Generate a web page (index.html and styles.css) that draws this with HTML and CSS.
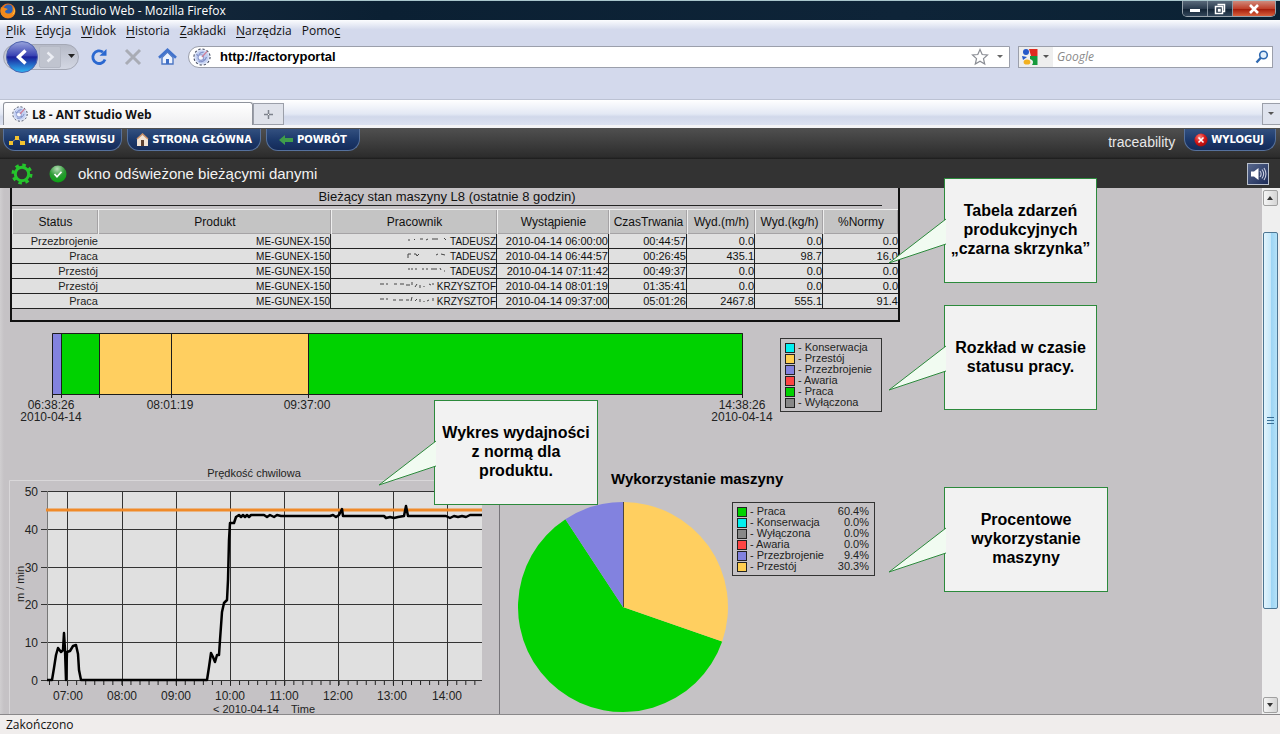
FILE: index.html
```html
<!DOCTYPE html>
<html lang="pl">
<head>
<meta charset="utf-8">
<title>L8 - ANT Studio Web</title>
<link rel="stylesheet" href="styles.css">
</head>
<body>
<svg class="defs" width="0" height="0" aria-hidden="true">
  <defs>
    <linearGradient id="gBack" x1="0" y1="0" x2="0" y2="1"><stop offset="0" stop-color="#9aa5dc"/><stop offset=".45" stop-color="#3a44b4"/><stop offset=".5" stop-color="#1a1f9a"/><stop offset="1" stop-color="#2fb8f4"/></linearGradient>
    <radialGradient id="gRed" cx=".4" cy=".3" r=".8"><stop offset="0" stop-color="#ff8a80"/><stop offset=".5" stop-color="#d81818"/><stop offset="1" stop-color="#8c0808"/></radialGradient>
    <radialGradient id="gGreen" cx=".45" cy=".2" r=".9"><stop offset="0" stop-color="#b8dcb8"/><stop offset=".5" stop-color="#2c9a34"/><stop offset="1" stop-color="#00a80a"/></radialGradient>
    <symbol id="logo" viewBox="0 0 16 16">
      <circle cx="8" cy="8" r="7.2" fill="#dfe6f8" stroke="#3a4258" stroke-width=".9" stroke-dasharray="2 1.8"/>
      <circle cx="8" cy="8" r="5.800" fill="#c3d0f2"/>
      <path d="M3 5.500 10 11M5 12c3 1 6-1 7-4M4.500 7.500l2-3 3-1" fill="none" stroke="#8291c8" stroke-width="1"/>
      <circle cx="7" cy="8.500" r="2.500" fill="#f5f7ff" stroke="#8f9dd0"/>
      <path d="M8 8l4.500-5" stroke="#d08098" stroke-width="1.200"/>
    </symbol>
  </defs>
</svg>

<header class="chrome">
  <div class="titlebar">
    <svg class="fox" width="16" height="16" viewBox="0 0 16 16" aria-hidden="true">
      <circle cx="8" cy="8" r="7.500" fill="#e8701a"/><circle cx="8.500" cy="6.500" r="5" fill="#2c62b8"/>
      <path d="M1 4c1 1 2 0 4 1l3 1c-1 1-3 1-3 3 2 2 5 2 7 0 1-2 1-4 0-6 3 2 4 6 2 9-2 3-7 4-10 2C0 12 0 7 1 4z" fill="#f28a1c"/>
      <path d="M13 4c2 3 1 6-1 8 3-1 4-5 1-8z" fill="#ffd24a"/>
    </svg>
    <span class="titletext">L8 - ANT Studio Web - Mozilla Firefox</span>
    <div class="winbtns">
      <button aria-label="Minimalizuj"><svg width="12" height="10"><rect x="1" y="5" width="10" height="3" fill="#fff"/></svg></button>
      <button aria-label="Przywróć"><svg width="12" height="12"><path d="M3.500 1.500h7v7h-2M1.500 3.500h7v7h-7zM4.500 6.500h1.500v1.500h-1.500z" fill="none" stroke="#fff" stroke-width="1.500"/></svg></button>
      <button class="close" aria-label="Zamknij"><svg width="12" height="10"><path d="M2 1l8 8M10 1l-8 8" stroke="#fff" stroke-width="2.600"/></svg></button>
    </div>
  </div>
  <nav class="menubar">
    <button><u>P</u>lik</button><button><u>E</u>dycja</button><button><u>W</u>idok</button><button><u>H</u>istoria</button><button><u>Z</u>akładki</button><button><u>N</u>arzędzia</button><button>Pomo<u>c</u></button>
  </nav>
  <div class="navbar">
    <div class="history">
      <button aria-label="Wstecz"><svg width="34" height="34" viewBox="0 0 34 34"><circle cx="17" cy="17" r="15.500" fill="url(#gBack)" stroke="#4d62ae"/><path d="M20.500 10.500 13.500 17l7 6.500" fill="none" stroke="#fff" stroke-width="3.400"/></svg></button>
      <button class="fwd" aria-label="Dalej"><svg width="20" height="20"><path d="M7.500 5.500 12.500 10l-5 4.500" fill="none" stroke="#eceef4" stroke-width="2.400"/></svg></button>
      <button class="drop" aria-label="Historia kart"><svg width="8" height="5"><path d="M0 0h7L3.500 4z" fill="#222"/></svg></button>
    </div>
    <button class="tool" aria-label="Odśwież"><svg width="18" height="18" viewBox="0 0 18 18"><path d="M15 11.500A6.300 6.300 0 1 1 13 4.200" fill="none" stroke="#2a68d0" stroke-width="2.800"/><path d="M9.500 7.800h7V1z" fill="#2a68d0"/></svg></button>
    <button class="tool" aria-label="Zatrzymaj"><svg width="18" height="18" viewBox="0 0 18 18"><path d="M2 2l14 14M16 2 2 16" stroke="#a9acb5" stroke-width="3"/></svg></button>
    <button class="tool" aria-label="Strona startowa"><svg width="19" height="18" viewBox="0 0 19 18"><path d="M4 9.500V16h11V9.500L9.500 4z" fill="#eef3fd" stroke="#4d77c4" stroke-width="1.400"/><path d="M1 9.800 9.500 1.800l8.500 8" fill="none" stroke="#4273cc" stroke-width="2.600"/><path d="M8 16v-5h3v5z" fill="#3f6fc6"/></svg></button>
    <div class="field url">
      <svg width="18" height="18"><use href="#logo"/></svg>
      <input type="text" aria-label="Adres" value="http://factoryportal">
      <button aria-label="Dodaj zakładkę"><svg width="18" height="18" viewBox="0 0 18 18"><path d="M9 1.500l2.200 5 5.300.5-4 3.600 1.200 5.400L9 13.200 4.300 16l1.200-5.400-4-3.600 5.300-.5z" fill="#fff" stroke="#8a8d94" stroke-width="1.200"/></svg></button>
      <button class="drop2" aria-label="Lista adresów"><svg width="7" height="4"><path d="M0 0h6L3 3z" fill="#666"/></svg></button>
    </div>
    <div class="field search">
      <button class="engine" aria-label="Wyszukiwarka"><svg width="18" height="18" viewBox="0 0 18 18"><path d="M8 1h8.500v7H10z" fill="#e02b20"/><path d="M9 8h7.500v9H11c2-3 1-5-2-6z" fill="#159a3c"/><circle cx="5" cy="4" r="3" fill="#2457c8"/><path d="M1 8l5 1-4 3z" fill="#2457c8"/><ellipse cx="6" cy="14" rx="3.400" ry="2.600" fill="#f2b01e"/></svg><svg width="7" height="4"><path d="M0 0h6L3 3z" fill="#555"/></svg></button>
      <input type="text" aria-label="Szukaj" placeholder="Google">
      <button aria-label="Szukaj w sieci"><svg width="14" height="14" viewBox="0 0 14 14"><circle cx="8.500" cy="5" r="3.800" fill="#e4f0fb" stroke="#2f69b0" stroke-width="1.600"/><path d="M5.800 7.800 1.500 12.500" stroke="#2f69b0" stroke-width="2.400"/></svg></button>
    </div>
  </div>
  <div class="tabstrip">
    <button class="tab"><svg width="16" height="16"><use href="#logo"/></svg>L8 - ANT Studio Web</button>
    <button class="newtab" aria-label="Nowa karta"><svg width="9" height="9"><path d="M4.500 0v9M0 4.500h9" stroke="#7d828c" stroke-width="1.500"/><rect x="4" y="4" width="1" height="1" fill="#fff"/></svg></button>
    <button class="alltabs" aria-label="Lista kart"><svg width="7" height="4"><path d="M0 0h6L3 3z" fill="#555"/></svg></button>
  </div>
</header>

<div class="app">
  <nav class="topbar">
    <a class="pill" href="#mapa"><svg width="16" height="12" viewBox="0 0 16 12"><path d="M3 8l5-4 5 4" stroke="#999" fill="none"/><rect x="0" y="7" width="4" height="4" fill="#f2c230"/><rect x="6" y="2" width="4" height="4" fill="#f2c230"/><rect x="11" y="7" width="5" height="4" fill="#f2c230"/></svg>MAPA SERWISU</a>
    <a class="pill" href="#start"><svg width="13" height="14" viewBox="0 0 13 14"><path d="M1 6 6.500 1 12 6v7H1z" fill="#f2e3d4"/><path d="M1 6 6.500 1 12 6" fill="none" stroke="#c89068" stroke-width="1.500"/><path d="M5 13V7h3v6z" fill="#5c4030"/></svg>STRONA GŁÓWNA</a>
    <a class="pill back" href="#powrot"><svg width="14" height="10" viewBox="0 0 14 10"><path d="M0 5l6-5v3h8v4H6v3z" fill="#3f9e4a"/></svg>POWRÓT</a>
    <span class="user">traceability</span>
    <button class="pill logout"><svg width="14" height="14"><circle cx="7" cy="7" r="6.500" fill="url(#gRed)"/><path d="M4.500 4.500l5 5M9.500 4.500l-5 5" stroke="#fff" stroke-width="1.600"/></svg>WYLOGUJ</button>
  </nav>
  <div class="infobar">
    <svg width="22" height="22" viewBox="0 0 22 22" aria-hidden="true"><circle cx="11" cy="11" r="9" fill="none" stroke="#25c52c" stroke-width="3" stroke-dasharray="3.500 3.570"/><circle cx="11" cy="11" r="6.700" fill="none" stroke="#25c52c" stroke-width="3"/></svg>
    <svg class="ok" width="18" height="18" viewBox="0 0 18 18" aria-hidden="true"><circle cx="9" cy="9" r="8.500" fill="url(#gGreen)"/><path d="M5.500 9l2.500 2.800 4.500-5" fill="none" stroke="#fff" stroke-width="1.700"/></svg>
    <span class="infotext">okno odświeżone bieżącymi danymi</span>
    <button class="sound" aria-label="Dźwięk"><svg width="20" height="20" viewBox="0 0 20 20"><path d="M3 7.500h3L10.500 4v12L6 12.500H3z" fill="#fff"/><path d="M12 7c1.500 2 1.500 4 0 6M14 5.500c2.200 3 2.200 6 0 9M16 4c2.600 4 2.600 8 0 12" fill="none" stroke="#c6cce0" stroke-width="1.100"/></svg></button>
  </div>

  <div class="viewport">
    <main class="content">
      <section class="events">
        <h1>Bieżący stan maszyny L8 (ostatnie 8 godzin)</h1>
        <table>
          <colgroup><col class="c1"><col class="c2"><col class="c3"><col class="c4"><col class="c5"><col class="c6"><col class="c6"><col class="c7"></colgroup>
          <thead><tr><th>Status</th><th>Produkt</th><th>Pracownik</th><th>Wystąpienie</th><th>CzasTrwania</th><th>Wyd.(m/h)</th><th>Wyd.(kg/h)</th><th>%Normy</th></tr></thead>
          <tbody>
            <tr><td>Przezbrojenie</td><td class="caps">ME-GUNEX-150</td><td class="caps"><svg class="smudge" width="40" height="8"><path d="M1 3h2M7 2l1 1M13 2h3M19 3l2-1M25 2h6M37 1l2 2" stroke="#444"/></svg>TADEUSZ</td><td>2010-04-14 06:00:00</td><td>00:44:57</td><td>0.0</td><td>0.0</td><td>0.0</td></tr>
            <tr><td>Praca</td><td class="caps">ME-GUNEX-150</td><td class="caps"><svg class="smudge" width="40" height="8"><path d="M1 6V2h3M7 2h2l1 2 2-2M29 3l2-1M34 2l4 1" fill="none" stroke="#444"/></svg>TADEUSZ</td><td>2010-04-14 06:44:57</td><td>00:26:45</td><td>435.1</td><td>98.7</td><td>16.0</td></tr>
            <tr><td>Przestój</td><td class="caps">ME-GUNEX-150</td><td class="caps"><svg class="smudge" width="40" height="8"><path d="M1 2h2M5 1v2M8 2h2M15 2h2M20 1v2M24 2h6M33 1l1 2M37 4h1" stroke="#444"/></svg>TADEUSZ</td><td>2010-04-14 07:11:42</td><td>00:49:37</td><td>0.0</td><td>0.0</td><td>0.0</td></tr>
            <tr><td>Przestój</td><td class="caps">ME-GUNEX-150</td><td class="caps"><svg class="smudge" width="55" height="8"><path d="M1 2h4M8 1v2M15 2h3M21 2h4M27 3h4M33 0v3M36 5l2-3M41 3v3M45 4v1M50 2l2 1M54 1v2" stroke="#444"/></svg>KRZYSZTOF</td><td>2010-04-14 08:01:19</td><td>01:35:41</td><td>0.0</td><td>0.0</td><td>0.0</td></tr>
            <tr><td>Praca</td><td class="caps">ME-GUNEX-150</td><td class="caps"><svg class="smudge" width="55" height="8"><path d="M1 2h4M8 1v2M14 3h3M20 3h4M27 3h3M32 4l1-4M36 4l2-2M41 2v3M45 4v1M48 4l2-1M54 1v3" stroke="#444"/></svg>KRZYSZTOF</td><td>2010-04-14 09:37:00</td><td>05:01:26</td><td>2467.8</td><td>555.1</td><td>91.4</td></tr>
          </tbody>
        </table>
      </section>

      <section class="timeline">
        <svg width="780" height="105" viewBox="0 0 780 105" role="img" aria-label="Rozkład statusu pracy w czasie">
          <rect x="52" y="11" width="10" height="62" fill="#8282df"/>
          <rect x="61" y="11" width="39" height="62" fill="#00d200"/>
          <rect x="99" y="11" width="209" height="62" fill="#ffcf60"/>
          <rect x="308" y="11" width="435" height="62" fill="#00d200"/>
          <path d="M52.500 76V11.500h690V76M52 72.500h691M61.500 11v65M99.500 11v65M171.500 11v65M308.500 11v65" fill="none" stroke="#1c1c1c"/>
          <g class="axis" text-anchor="middle">
            <text x="51" y="87">06:38:26</text><text x="51" y="99">2010-04-14</text>
            <text x="170" y="87">08:01:19</text><text x="307" y="87">09:37:00</text>
            <text x="742" y="87">14:38:26</text><text x="742" y="99">2010-04-14</text>
          </g>
        </svg>
        <ul class="legend">
          <li><i class="cyan"></i>- Konserwacja</li><li><i class="amber"></i>- Przestój</li><li><i class="blue"></i>- Przezbrojenie</li><li><i class="red"></i>- Awaria</li><li><i class="green"></i>- Praca</li><li><i class="grey"></i>- Wyłączona</li>
        </ul>
      </section>

      <section class="charts">
        <svg class="speed" width="500" height="287" viewBox="0 0 500 287" role="img" aria-label="Prędkość chwilowa">
          <text x="254" y="50" text-anchor="middle" class="small">Prędkość chwilowa</text>
          <path d="M9.500 287V53.500h489" fill="none" stroke="#d9d7d9"/>
          <path d="M499.500 53v234" stroke="#77757a"/>
          <rect x="47" y="64" width="435" height="189" fill="#e0e0e0"/>
          <path d="M41 64.500h441M41 102.500h441M41 140.500h441M41 177.500h441M41 215.500h441M41 253.500h441M67.500 64v195M122.500 64v195M176.500 64v195M230.500 64v195M284.500 64v195M338.500 64v195M393.500 64v195M447.500 64v195" stroke="#333"/>
          <path d="M47.500 64v190" stroke="#777"/>
          <path d="M49 256h434" stroke="#222" stroke-width="4" stroke-dasharray="1 8.050"/>
          <path d="M46 83h436" stroke="#f08a28" stroke-width="3"/>
          <path d="M47 253H52L54 241 56 228 58 221 61 225 63 223 64 206 65 223 66 253 67 225 70 224 73 219 76 218 78 227 79 243 81 253H207L209 240 211 226 213 230 215 235 217 228H219L220 213 222 185 224 176 227 173 228 153 229 113 230 96H234L236 90 239 88 241 90 243 88 245 90 247 88 249 90 251 88H264L267 90 270 88 274 90 277 88 281 89H330L333 88 336 90 339 88 342 82 343 89H384L386 91 390 90 394 91 398 90 404 89 406 79 408 89H446L450 91 454 89 458 90 462 89 466 90 470 88H482" fill="none" stroke="#000" stroke-width="2.500" stroke-linejoin="round"/>
          <g class="axis" text-anchor="end"><text x="38" y="69">50</text><text x="38" y="107">40</text><text x="38" y="145">30</text><text x="38" y="182">20</text><text x="38" y="220">10</text><text x="38" y="258">0</text></g>
          <g class="axis" text-anchor="middle"><text x="68" y="273">07:00</text><text x="122" y="273">08:00</text><text x="176" y="273">09:00</text><text x="230" y="273">10:00</text><text x="284" y="273">11:00</text><text x="338" y="273">12:00</text><text x="392" y="273">13:00</text><text x="447" y="273">14:00</text></g>
          <text class="small" x="213" y="286">&lt; 2010-04-14</text><text class="small" x="291" y="286">Time</text>
          <text class="small" transform="translate(24 157) rotate(-90)" text-anchor="middle">m / min</text>
        </svg>
        <div class="usage">
          <h2>Wykorzystanie maszyny</h2>
          <div class="pierow">
            <svg width="210" height="210" viewBox="0 0 210 210" role="img" aria-label="Wykorzystanie maszyny">
              <path d="M105 105 204.200 139.400A105 105 0 1 1 47.400 17.200z" fill="#00d200"/>
              <path d="M105 105V0A105 105 0 0 1 204.200 139.400z" fill="#ffcf60"/>
              <path d="M105 105 47.400 17.200A105 105 0 0 1 105 0z" fill="#8282df"/>
              <path d="M105.500 0v105" stroke="#4c4440"/>
            </svg>
            <ul class="legend wide">
              <li><i class="green"></i>- Praca<b>60.4%</b></li><li><i class="cyan"></i>- Konserwacja<b>0.0%</b></li><li><i class="grey"></i>- Wyłączona<b>0.0%</b></li><li><i class="red"></i>- Awaria<b>0.0%</b></li><li><i class="blue"></i>- Przezbrojenie<b>9.4%</b></li><li><i class="amber"></i>- Przestój<b>30.3%</b></li>
            </ul>
          </div>
        </div>
      </section>
    </main>
    <div class="scroll">
      <button aria-label="W górę"><svg width="7" height="4"><path d="M0 4h6L3 0z" fill="#333"/></svg></button>
      <div class="track"><div class="thumb"><svg width="7" height="8"><path d="M0 .5h7M0 3.500h7M0 6.500h7" stroke="#3a6f96"/></svg></div></div>
      <button aria-label="W dół"><svg width="7" height="4"><path d="M0 0h6L3 4z" fill="#333"/></svg></button>
    </div>
  </div>

  <aside class="callout note-table"><p>Tabela zdarzeń produkcyjnych „czarna skrzynka”</p><svg class="tail" width="58" height="50"><path d="M58 2 1 46 58 27" fill="#f1fbf1" stroke="#2c8a3c"/></svg></aside>
  <aside class="callout note-timeline"><p>Rozkład w czasie statusu pracy.</p><svg class="tail" width="58" height="50"><path d="M58 2 1 46 58 27" fill="#f1fbf1" stroke="#2c8a3c"/></svg></aside>
  <aside class="callout note-speed"><p>Wykres wydajności z normą dla produktu.</p><svg class="tail" width="58" height="50"><path d="M58 2 1 46 58 27" fill="#f1fbf1" stroke="#2c8a3c"/></svg></aside>
  <aside class="callout note-usage"><p>Procentowe wykorzystanie maszyny</p><svg class="tail" width="58" height="50"><path d="M58 2 1 46 58 27" fill="#f1fbf1" stroke="#2c8a3c"/></svg></aside>
</div>
<footer class="statusbar">Zakończono</footer>
</body>
</html>
```
FILE: styles.css
```css
* { box-sizing: border-box; }
body { margin: 0; min-height: 100vh; display: flex; flex-direction: column; font-family: "Open Sans", "Noto Sans", sans-serif; font-size: 12px; color: #111; background: #f0edec; }
button { border: 0; padding: 0; margin: 0; background: none; font: inherit; color: inherit; }
svg { display: block; flex: none; }
.defs { position: absolute; }

/* Browser chrome */
.chrome { background: #d3d9ec; }
.titlebar { display: flex; align-items: center; height: 20px; padding-right: 4px; background: linear-gradient(90deg, #1a2c40, #0b2033 30%, #0e2438 70%, #0b2234); border-top: 1px solid #a9c6cc; color: #fff; }
.titletext { margin-left: 5px; line-height: 18px; font-size: 12px; }
.winbtns { display: flex; align-self: flex-start; margin-left: auto; border: 1px solid #9aa5ae; border-top: 0; border-radius: 0 0 5px 5px; overflow: hidden; }
.winbtns button { display: flex; align-items: center; justify-content: center; width: 25px; height: 15px; background: linear-gradient(#59697a, #2a3b4e 50%, #0f2031 51%, #33475b); border-right: 1px solid #8b98a4; }
.winbtns .close { width: 42px; border: 0; background: linear-gradient(#d08a7c, #c0412c 50%, #a01808 51%, #d8603c); }
.menubar { display: flex; gap: 10px; height: 22px; padding: 0 6px; background: linear-gradient(#fbfcfe, #d3d9ec 45%); }
.menubar button { line-height: 20px; }
.menubar u { text-underline-offset: 2px; }
.navbar { display: flex; align-items: center; height: 57px; padding: 0 7px 28px 3px; }
.history { display: flex; align-items: center; height: 26px; width: 76px; border-radius: 13px; border: 1px solid #a4a8b5; background: linear-gradient(#b6bac7, #d3d7e3); margin-right: 11px; }
.history button:first-child { margin-left: 1px; }
.fwd { border: 1px solid #b5b9c5; border-radius: 2px; background: #c0c4cf; }
.drop { margin-left: 7px; }
.tool { margin-right: 16px; }
.tool + .tool + .tool { margin-right: 11px; }
.field { display: flex; align-items: center; height: 22px; background: #fff; border: 1px solid #9b9fab; }
.field input { flex: 1; min-width: 0; border: 0; outline: 0; background: none; padding: 0; height: 18px; }
.url { flex: 1; border-radius: 11px 0 0 11px; padding: 0 5px 0 4px; margin-right: 8px; }
.url input { margin-left: 9px; font: bold 13px "Liberation Sans", sans-serif; color: #000; }
.drop2 { margin-left: 8px; }
.search { width: 255px; padding-right: 3px; }
.engine { display: flex; align-items: center; gap: 4px; height: 20px; padding: 0 3px 0 2px; background: #eee; }
.search input { margin-left: 4px; font: italic 12px "Open Sans", sans-serif; }
.search input::placeholder { color: #8a8a8a; }
.tabstrip { display: flex; align-items: flex-end; height: 29px; padding: 0 0 3px 3px; border-top: 1px solid #bcc2d3; background: linear-gradient(#fff, #e3e8f4 50%, #d1d8ea 60%, #dbe1f0 88%, #f4f4f6 90%); }
.tab { display: flex; align-items: center; gap: 4px; flex: 0 1 250px; height: 23px; padding-left: 8px; border: 1px solid #8f939c; border-bottom: 0; border-radius: 3px 3px 0 0; background: linear-gradient(#fff, #efeff1); font-weight: bold; text-align: left; }
.newtab { display: flex; align-items: center; justify-content: center; width: 31px; height: 22px; border: 1px solid #9b9fa9; background: #dfe2ea; }
.alltabs { display: flex; align-items: center; justify-content: center; width: 18px; height: 22px; margin-left: auto; border: 1px solid #9b9fa9; border-right: 0; background: #dfe3ee; }

/* Application bars */
.app { position: relative; flex: 1; display: flex; flex-direction: column; font-family: "Liberation Sans", Arial, sans-serif; }
.topbar { display: flex; align-items: flex-start; gap: 5px; height: 31px; padding: 1px 4px 0 3px; background: linear-gradient(#505050, #2c2c2c 93%, #1c1c1c); }
.pill { display: flex; align-items: center; gap: 3px; height: 22px; padding: 0 6px 0 5px; border: 1px solid #56719c; border-top: 0; border-radius: 0 0 12px 12px; background: linear-gradient(#33507f, #1d3a6c 50%, #142a58); color: #fff; font: bold 10px "DejaVu Sans", sans-serif; text-decoration: none; }
.topbar .pill + .pill { padding: 0 8px; }
.topbar .back.pill { padding: 0 12px; gap: 4px; }
.user { margin-left: auto; margin-right: 4px; line-height: 26px; font-size: 14px; color: #e8e8e8; }
.topbar .logout { padding: 0 11px 0 9px; }
.infobar { display: flex; align-items: center; height: 29px; padding: 0 11px; background: #333; }
.ok { margin: 0 11px 0 16px; }
.infotext { font-size: 15px; color: #f2f2f2; }
.sound { margin-left: auto; border: 1px solid #b9c0cc; background: linear-gradient(135deg, #56668c, #1d2c58); }

/* Page body */
.viewport { flex: 1; display: flex; border-bottom: 1px solid #8a888a; }
.content { flex: 1; min-width: 0; background: linear-gradient(90deg, #d0ced0, #c5c2c5 4px); }
.events { width: min(890px, calc(100% - 20px)); height: 134px; margin-left: 10px; border: 2px solid #111; }
.events h1 { margin: 0 16px 3px 0; height: 18px; border-bottom: 1px solid #222; text-align: center; font-size: 13px; line-height: 18px; font-weight: normal; }
table { width: 100%; table-layout: fixed; border-collapse: separate; border-spacing: 0; }
.events { border-top: 0; }
.c1 { width: 86px; } .c3 { width: 166px; } .c4 { width: 112px; } .c5 { width: 78px; } .c6 { width: 68px; } .c7 { width: 75px; }
th { height: 25px; padding: 0; font-size: 12px; font-weight: normal; border: 1px solid #eee; border-width: 1px 0 0 1px; box-shadow: inset -1px -1px #a5a3a5; background: #c4c4c4; }
td { height: 15px; padding: 1px 0 0; font-size: 11px; line-height: 13px; text-align: right; white-space: nowrap; background: #e0e0e0; border-right: 1px solid #222; border-bottom: 1px solid #222; }
td:first-child, td:last-child { border-right: 0; }
td:first-child { color: #222; }
.caps { font-size: 10px; }
.smudge { display: inline-block; margin-right: 3px; }
.timeline { display: flex; align-items: flex-start; height: 105px; }
.axis text { font-size: 12px; fill: #222; }
.small { font-size: 11px; fill: #222; }
.legend { list-style: none; margin: 16px 0 0; padding: 3px 4px; width: 102px; border: 1px solid #333; font-size: 11px; line-height: 11px; color: #222; }
.legend li { display: flex; gap: 3px; }
.legend i { width: 10px; height: 10px; border: 1px solid #222; margin-top: 1px; }
.legend b { margin-left: auto; font-weight: normal; }
.legend.wide { width: 143px; margin: 0 0 0 4px; padding: 3px 5px 3px 4px; }
.cyan { background: #00f0f0; } .amber { background: #ffcf50; } .blue { background: #8282df; }
.red { background: #f44; } .green { background: #00d200; } .grey { background: #888; }
.charts { display: flex; align-items: flex-start; }
.speed { overflow: visible; }
.usage { padding: 42px 0 0 18px; }
.usage h2 { margin: 0 0 13px 93px; font-size: 15px; line-height: 20px; color: #000; }
.pierow { display: flex; align-items: flex-start; }
.scroll { display: flex; flex-direction: column; width: 18px; padding: 2px 2px 1px 1px; background: #efefef; }
.scroll button { display: flex; align-items: center; justify-content: center; height: 16px; border: 1px solid #a0a0a0; border-radius: 2px; background: linear-gradient(90deg, #f5f5f5, #d5d5d5); }
.track { flex: 1; padding: 26px 0 88px; }
.thumb { display: flex; align-items: center; justify-content: center; height: 100%; border: 1px solid #4d7693; border-radius: 2px; background: linear-gradient(90deg, #e2f4fd, #c6e8fa 50%, #9ad3f3 51%, #b5e2f8); }

/* Annotations laid over the page */
.callout { position: absolute; display: flex; align-items: center; justify-content: center; width: 153px; height: 105px; border: 1px solid #2c8a3c; background: #f2f2f2; font-size: 16px; line-height: 19px; font-weight: bold; text-align: center; color: #000; }
.callout p { margin: 0 0 2px; padding: 0 4px; }
.tail { position: absolute; left: -57px; top: 38px; }
.note-table { left: 944px; top: 50px; }
.note-timeline { left: 944px; top: 177px; }
.note-speed { left: 434px; top: 272px; width: 164px; }
.note-usage { left: 944px; top: 359px; width: 164px; }

.statusbar { height: 19px; padding-left: 6px; line-height: 20px; font-size: 12px; background: #f0edec; }
```
